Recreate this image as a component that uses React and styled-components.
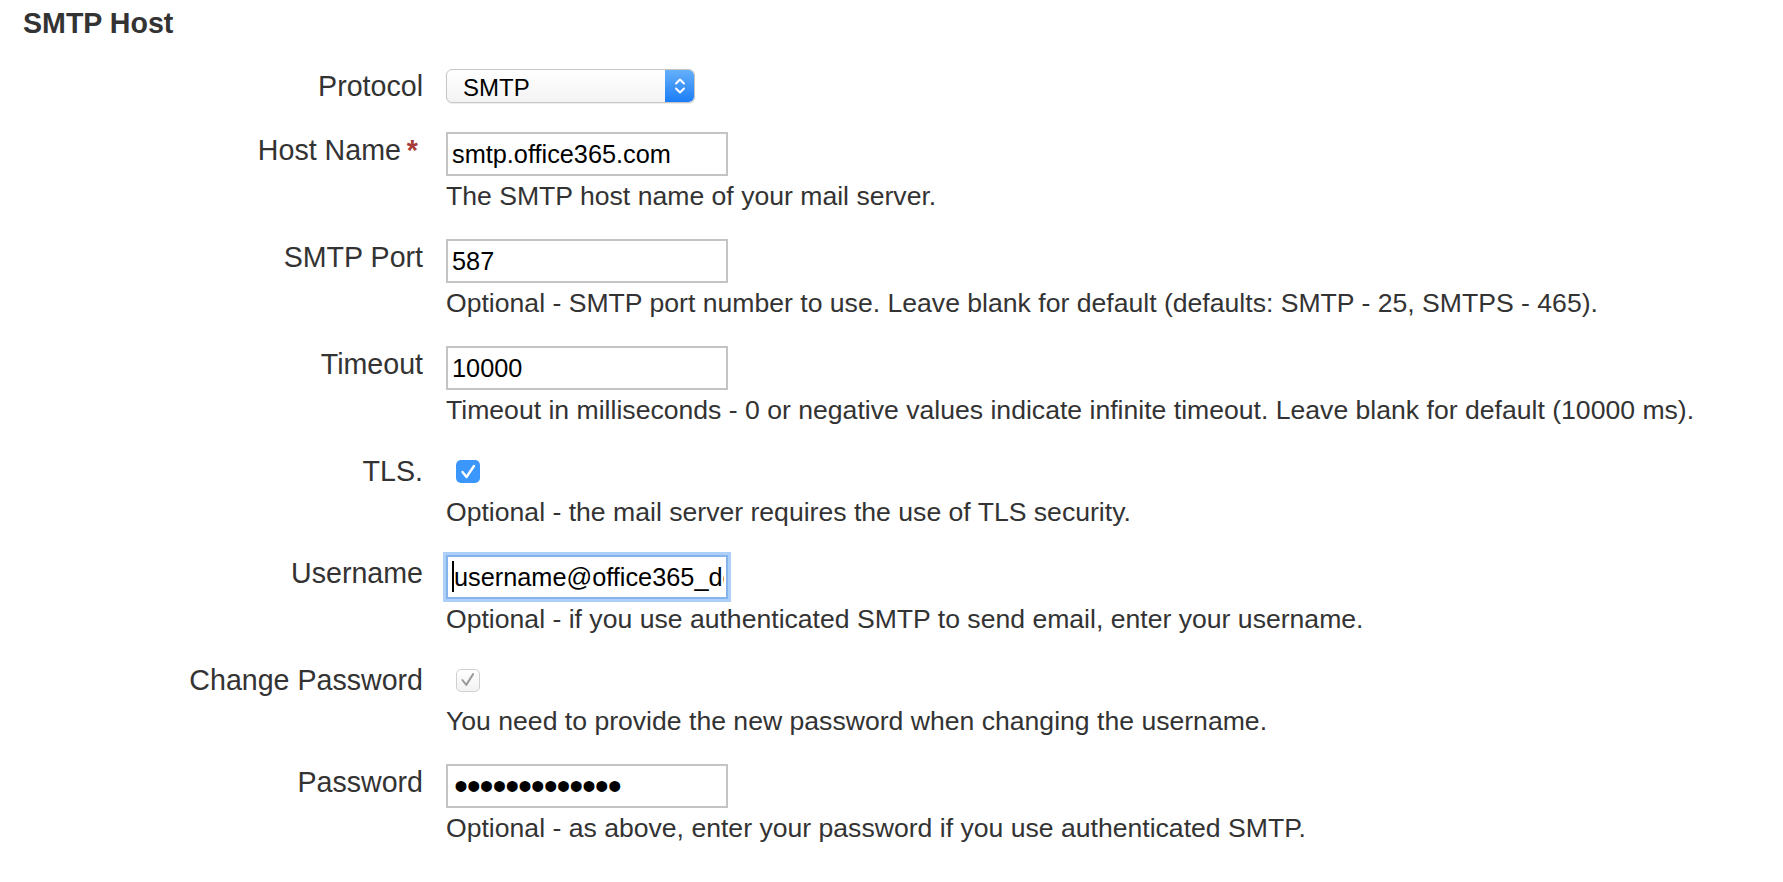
import React from 'react';
import styled, { createGlobalStyle, css } from 'styled-components';

const GlobalStyle = createGlobalStyle`
  html, body { margin: 0; padding: 0; background: #fff; }
  body {
    font-family: "Liberation Sans", Arial, Helvetica, sans-serif;
    color: #333;
  }
`;

const Page = styled.div`
  padding-top: 7px;
`;

const Title = styled.h2`
  margin: 0 0 29px 23px;
  font-size: 28.6px;
  line-height: 32px;
  font-weight: bold;
  color: #333;
`;

const Form = styled.form`
  display: grid;
  grid-template-columns: 423px 1fr;
  column-gap: 23px;
  row-gap: 28px;
  align-items: start;
`;

const Label = styled.label`
  text-align: right;
  font-size: 28.6px;
  line-height: 36px;
  color: #333;
  white-space: nowrap;
`;

const Required = styled.span`
  margin-left: 6px;
  margin-right: 5px;
  color: #a83a3a;
  font-weight: bold;
`;

const Field = styled.div`
  display: flex;
  flex-direction: column;
  align-items: flex-start;
`;

const Help = styled.div`
  margin-top: 5px;
  font-size: 26.6px;
  line-height: 30px;
  color: #333;
  white-space: nowrap;
`;

const TextInput = styled.input`
  box-sizing: border-box;
  width: 282px;
  height: 44px;
  margin: 0;
  padding: 0 4px;
  border: 2px solid #c4c4c4;
  border-radius: 0;
  background: #fff;
  font-family: "Liberation Sans", Arial, sans-serif;
  font-size: 25.3px;
  color: #000;
  outline: none;
  ${(p) =>
    p.$focused &&
    css`
      border-color: #86b3ee;
      padding-left: 6px;
      padding-right: 2px;
      box-shadow: 0 0 0 3px #acd0f7;
    `}
`;

const PasswordInput = styled(TextInput)`
  font-size: 40px;
  letter-spacing: -1.2px;
  padding-left: 6px;
`;

const CaretWrap = styled.span`
  position: relative;
  display: inline-block;
`;

const Caret = styled.span`
  position: absolute;
  left: 6px;
  top: 6px;
  width: 2px;
  height: 31px;
  background: #000;
`;

const SelectBox = styled.div`
  box-sizing: border-box;
  width: 249px;
  height: 34px;
  margin-top: 1px;
  display: flex;
  align-items: stretch;
  border: 1px solid #c6c6c6;
  border-radius: 6px;
  background: linear-gradient(#ffffff, #f3f3f3);
  box-shadow: 0 1px 1px rgba(0, 0, 0, 0.08);
  overflow: hidden;
`;

const NativeSelect = styled.select`
  flex: 1;
  appearance: none;
  -webkit-appearance: none;
  border: none;
  background: transparent;
  margin: 0;
  padding: 2px 0 0 16px;
  font-family: "Liberation Sans", Arial, sans-serif;
  font-size: 24px;
  color: #000;
  outline: none;
`;

const Stepper = styled.span`
  width: 29px;
  display: flex;
  align-items: center;
  justify-content: center;
  border-radius: 0 5px 5px 0;
  background: linear-gradient(#66b0fb, #1b7df6);
`;

const CheckLine = styled.div`
  height: 39px;
  display: flex;
  align-items: flex-start;
`;

const Check = styled.span`
  box-sizing: border-box;
  width: 24px;
  height: 23px;
  margin: 7px 0 0 10px;
  border-radius: 5px;
  display: flex;
  align-items: center;
  justify-content: center;
  ${(p) =>
    p.$disabled
      ? css`
          background: linear-gradient(#ffffff, #f2f2f2);
          border: 1.5px solid #d0d0d0;
        `
      : css`
          background: #3b97fb;
        `}
`;

function Chevrons() {
  return (
    <svg width="14" height="20" viewBox="0 0 14 20" fill="none">
      <path d="M3 7.5 L7 3.5 L11 7.5" stroke="#fff" strokeWidth="2" strokeLinecap="round" strokeLinejoin="round" />
      <path d="M3 12.5 L7 16.5 L11 12.5" stroke="#fff" strokeWidth="2" strokeLinecap="round" strokeLinejoin="round" />
    </svg>
  );
}

function CheckMark({ disabled }) {
  return (
    <svg width="24" height="23" viewBox="0 0 24 23" fill="none" style={disabled ? { marginLeft: -1.5, marginTop: -1.5 } : undefined}>
      <path
        d={disabled ? 'M6.5 12 L10.5 17 L17.5 6' : 'M6.5 12 L10.5 17 L18 6'}
        stroke={disabled ? '#9a9a9a' : '#fff'}
        strokeWidth={disabled ? 2 : 2.4}
        strokeLinecap="round"
        strokeLinejoin="round"
      />
    </svg>
  );
}

export default function App() {
  return (
    <>
      <GlobalStyle />
      <Page>
        <Title>SMTP Host</Title>
        <Form onSubmit={(e) => e.preventDefault()}>
          <Label htmlFor="protocol">Protocol</Label>
          <Field>
            <SelectBox>
              <NativeSelect id="protocol" defaultValue="SMTP">
                <option>SMTP</option>
                <option>SMTPS</option>
              </NativeSelect>
              <Stepper>
                <Chevrons />
              </Stepper>
            </SelectBox>
          </Field>

          <Label htmlFor="host">
            Host Name<Required>*</Required>
          </Label>
          <Field>
            <TextInput id="host" defaultValue="smtp.office365.com" />
            <Help>The SMTP host name of your mail server.</Help>
          </Field>

          <Label htmlFor="port">SMTP Port</Label>
          <Field>
            <TextInput id="port" defaultValue="587" />
            <Help>Optional - SMTP port number to use. Leave blank for default (defaults: SMTP - 25, SMTPS - 465).</Help>
          </Field>

          <Label htmlFor="timeout">Timeout</Label>
          <Field>
            <TextInput id="timeout" defaultValue="10000" />
            <Help>Timeout in milliseconds - 0 or negative values indicate infinite timeout. Leave blank for default (10000 ms).</Help>
          </Field>

          <Label>TLS.</Label>
          <Field>
            <CheckLine>
              <Check role="checkbox" aria-checked="true">
                <CheckMark />
              </Check>
            </CheckLine>
            <Help>Optional - the mail server requires the use of TLS security.</Help>
          </Field>

          <Label htmlFor="username">Username</Label>
          <Field>
            <CaretWrap>
              <TextInput id="username" $focused defaultValue="username@office365_domain.com" />
              <Caret />
            </CaretWrap>
            <Help>Optional - if you use authenticated SMTP to send email, enter your username.</Help>
          </Field>

          <Label>Change Password</Label>
          <Field>
            <CheckLine>
              <Check role="checkbox" aria-checked="true" aria-disabled="true" $disabled>
                <CheckMark disabled />
              </Check>
            </CheckLine>
            <Help>You need to provide the new password when changing the username.</Help>
          </Field>

          <Label htmlFor="password">Password</Label>
          <Field>
            <PasswordInput id="password" type="password" defaultValue="passwordvalu1" />
            <Help>Optional - as above, enter your password if you use authenticated SMTP.</Help>
          </Field>
        </Form>
      </Page>
    </>
  );
}
